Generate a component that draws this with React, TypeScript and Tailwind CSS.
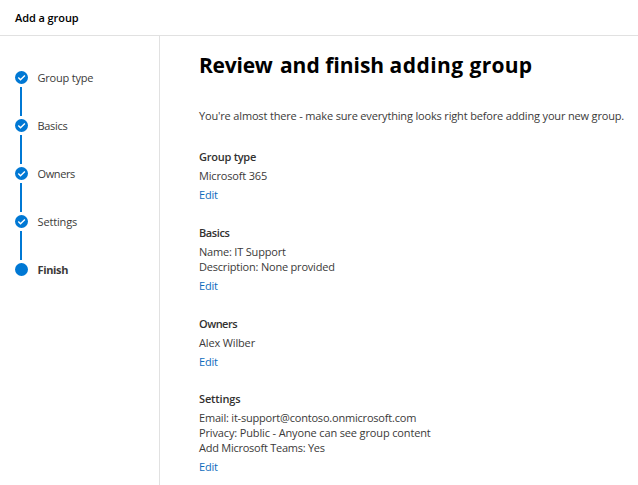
const steps = [
  { label: 'Group type', fit: 'tracking-[-0.2px]' },
  { label: 'Basics', fit: 'tracking-[-0.3px]' },
  { label: 'Owners', fit: 'tracking-[-0.4px]' },
  { label: 'Settings', fit: 'tracking-[-0.15px]' },
  { label: 'Finish', fit: 'tracking-[-0.35px] font-bold' },
];

type Line = { text: string; fit: string };
type Section = { title: string; titleFit: string; gap: string; lines: Line[] };

const sections: Section[] = [
  {
    title: 'Group type', titleFit: 'tracking-[-0.25px]', gap: 'mt-[26px]',
    lines: [{ text: 'Microsoft 365', fit: 'tracking-[-0.17px]' }],
  },
  {
    title: 'Basics', titleFit: 'tracking-[-0.4px]', gap: 'mt-[23px]',
    lines: [
      { text: 'Name: IT Support', fit: 'tracking-[-0.19px]' },
      { text: 'Description: None provided', fit: 'tracking-[-0.2px]' },
    ],
  },
  {
    title: 'Owners', titleFit: 'tracking-[-0.5px]', gap: 'mt-[23px]',
    lines: [{ text: 'Alex Wilber', fit: 'tracking-[-0.15px]' }],
  },
  {
    title: 'Settings', titleFit: 'tracking-[-0.15px]', gap: 'mt-[22px]',
    lines: [
      { text: 'Email: it-support@contoso.onmicrosoft.com', fit: 'tracking-[-0.2px]' },
      { text: 'Privacy: Public - Anyone can see group content', fit: 'tracking-[-0.14px]' },
      { text: 'Add Microsoft Teams: Yes', fit: 'tracking-[-0.25px]' },
    ],
  },
];

function StepDot({ done }: { done: boolean }) {
  return (
    <svg className="block h-[13px] w-[13px] shrink-0" viewBox="0 0 13 13">
      <circle cx="6.5" cy="6.5" r="6.5" fill="#0078d4" />
      {done && <path d="M3.3 6.6 5.5 8.7 9.9 4.4" fill="none" stroke="#fff" strokeWidth="1.4" />}
    </svg>
  );
}

export default function App() {
  return (
    <div className="flex h-[485px] w-[638px] flex-col overflow-hidden bg-white font-['Open_Sans','Noto_Sans',sans-serif] text-[11px] leading-[15px] text-[#3b3a39]">
      <header className="flex h-9 shrink-0 items-center border-b border-[#e1e1e1] pl-[15px] font-semibold text-black">
        <span className="tracking-[-0.08px]">Add a group</span>
      </header>
      <div className="flex min-h-0 flex-1">
        <nav className="w-[160px] shrink-0 border-r border-[#e1e1e1] pt-[35px] pl-[15px]">
          {steps.map((step, i) => (
            <div key={step.label} className="flex h-12 items-start">
              <div className="flex w-[13px] shrink-0 flex-col items-center">
                <StepDot done={i < 4} />
                {i < 4 && <div className="mt-[3px] mr-px h-[29px] w-[2px] bg-[#0078d4]" />}
              </div>
              <span className="-mt-px ml-[9.5px]"><span className={step.fit}>{step.label}</span></span>
            </div>
          ))}
        </nav>
        <main className="min-w-0 flex-1 pt-[13px] pl-[39px] whitespace-nowrap">
          <h1 className="text-[21px] leading-8 font-bold text-black">
            <span className="tracking-[-0.25px] [word-spacing:2.2px]">Review </span>
            and finish <span className="tracking-[0.45px]">adding </span>
            <span className="tracking-[0.25px]">group</span>
          </h1>
          <p className="mt-[27px]">
            <span className="tracking-[-0.163px]">You're almost there - make sure everything looks right before adding your new group.</span>
          </p>
          {sections.map((s) => (
            <section key={s.title} className={s.gap}>
              <h2 className="font-semibold text-[#323130]"><span className={s.titleFit}>{s.title}</span></h2>
              <div className="my-1">
                {s.lines.map((l) => (
                  <p key={l.text}><span className={l.fit}>{l.text}</span></p>
                ))}
              </div>
              <a className="block tracking-[-0.2px] text-[#0f6cbd]">Edit</a>
            </section>
          ))}
        </main>
      </div>
    </div>
  );
}
